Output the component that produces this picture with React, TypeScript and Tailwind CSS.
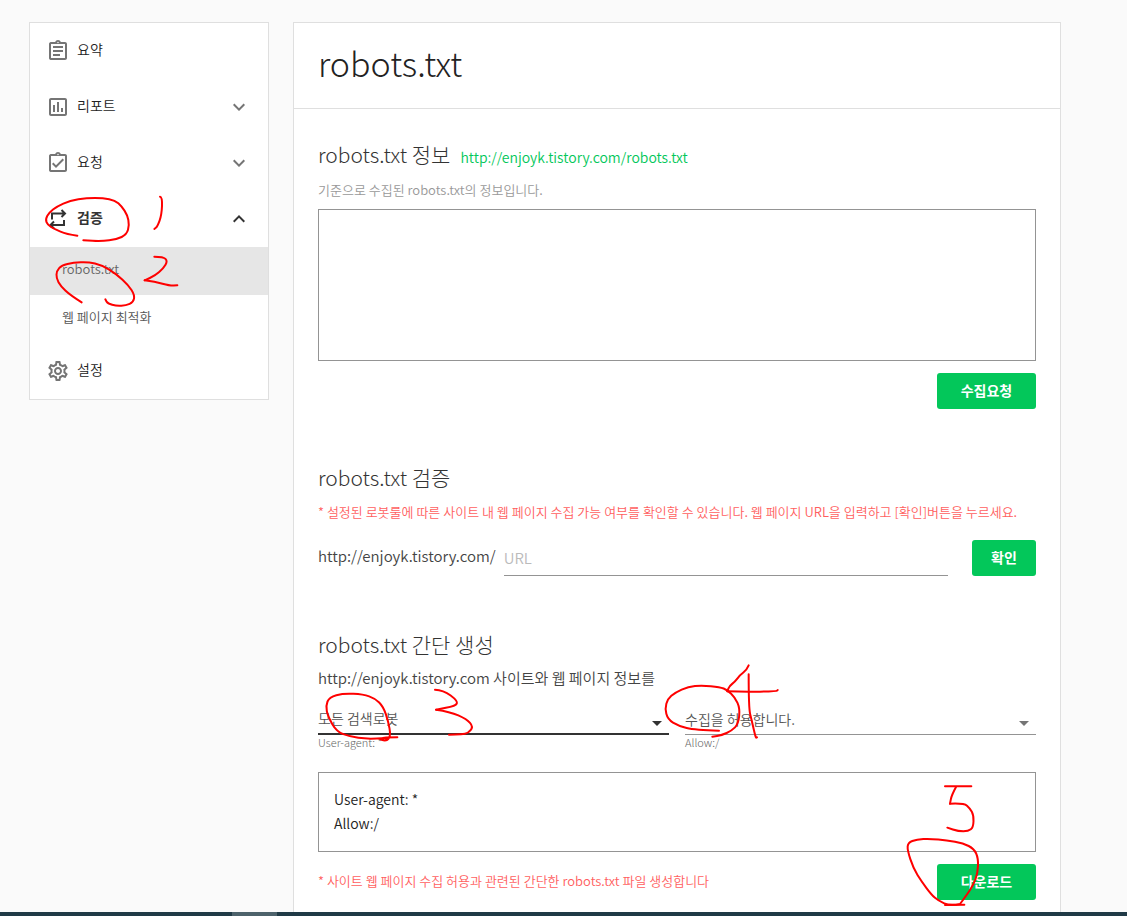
import type { ReactNode } from "react";
import {
  MdExpandLess,
  MdExpandMore,
  MdOutlineAssessment,
  MdOutlineAssignment,
  MdOutlineAssignmentTurnedIn,
  MdOutlineSettings,
} from "react-icons/md";

type Point = [number, number];

interface InkGroup {
  x: number;
  y: number;
  strokes: Point[][];
}

/* Pen strokes drawn over the page, in thirds of a pixel from each group's origin. */
const ink: InkGroup[] = [
  {
    x: 20,
    y: 185,
    strokes: [
      [[172, 152], [140, 148], [103, 132], [83, 120], [76, 103], [88, 82], [110, 65], [150, 47], [200, 39], [250, 39], [285, 46], [305, 64], [322, 90], [328, 120], [320, 149], [290, 163], [245, 169], [190, 166]],
      [[420, 35], [427, 36], [425, 90], [412, 125], [403, 132]],
      [[403, 215], [430, 215], [443, 228], [430, 250], [405, 272], [374, 286]],
      [[374, 286], [405, 290], [450, 302], [472, 301]],
      [[185, 352], [150, 330], [122, 303], [109, 280], [110, 258], [125, 241], [160, 233], [205, 231], [245, 240], [290, 268], [325, 300], [344, 330], [340, 352], [318, 361], [290, 363], [263, 356], [256, 343]],
    ],
  },
  {
    x: 300,
    y: 620,
    strokes: [
      [[292, 352], [250, 352], [238, 359], [262, 363], [272, 345], [265, 305], [250, 260], [225, 235], [190, 223], [130, 220], [88, 231], [77, 258], [84, 290], [110, 335], [150, 350], [200, 357], [260, 354]],
      [[405, 209], [430, 210], [474, 243], [467, 258], [408, 269]],
      [[408, 269], [450, 275], [500, 297], [520, 320], [505, 339], [485, 343], [447, 344]],
    ],
  },
  {
    x: 640,
    y: 640,
    strokes: [
      [[237, 272], [165, 270], [115, 258], [83, 238], [75, 205], [83, 177], [105, 158], [145, 140], [185, 136], [240, 141], [262, 150], [285, 172], [300, 205], [295, 252], [275, 272], [245, 286], [217, 290]],
      [[326, 76], [320, 90], [300, 105], [285, 125], [268, 138], [262, 154]],
      [[262, 154], [310, 156], [410, 154], [413, 150]],
      [[326, 103], [326, 205], [335, 240], [347, 294], [351, 292]],
    ],
  },
  {
    x: 860,
    y: 760,
    strokes: [
      [[255, 79], [334, 79]],
      [[288, 81], [275, 105], [270, 131]],
      [[270, 131], [312, 129], [330, 145], [341, 165], [340, 202], [325, 214], [295, 214], [262, 203]],
      [[300, 432], [270, 438], [235, 422], [215, 405], [185, 365], [160, 325], [142, 270], [144, 248], [170, 238], [210, 236], [260, 241], [310, 250], [342, 266], [355, 295], [353, 340], [340, 375], [320, 405], [300, 432]],
      [[255, 435], [313, 434]],
    ],
  },
];

function strokePath(points: Point[]): string {
  const last = points[points.length - 1];
  let d = `M${points[0][0]} ${points[0][1]}`;
  for (let i = 1; i < points.length - 1; i++) {
    const [x, y] = points[i];
    const [nx, ny] = points[i + 1];
    d += ` Q${x} ${y} ${(x + nx) / 2} ${(y + ny) / 2}`;
  }
  return `${d} L${last[0]} ${last[1]}`;
}

function PenNotes() {
  return (
    <svg
      className="pointer-events-none absolute left-0 top-0"
      width="1127"
      height="916"
      fill="none"
      stroke="#fe0000"
      strokeWidth="6"
      strokeLinecap="round"
      strokeLinejoin="round"
      aria-hidden="true"
    >
      {ink.map((group) => (
        <g key={group.y} transform={`translate(${group.x} ${group.y}) scale(0.33333)`}>
          {group.strokes.map((points, i) => (
            <path key={i} d={strokePath(points)} />
          ))}
        </g>
      ))}
    </svg>
  );
}

function VerifyIcon() {
  return (
    <svg width="24" height="24" viewBox="0 0 24 24" fill="none" stroke="currentColor" strokeWidth="2" aria-hidden="true">
      <path d="M6 12.500V6.500h13M15.500 3l3.500 3.500-3.500 3.500M18 13v5H4.500M8 14.500 4.500 18 8 21.500" />
    </svg>
  );
}

interface NavItemProps {
  icon: ReactNode;
  label: string;
  state?: "closed" | "open";
}

function NavItem({ icon, label, state }: NavItemProps) {
  const open = state === "open";
  return (
    <button
      type="button"
      aria-expanded={state ? open : undefined}
      className={
        open
          ? "flex h-14 w-full items-center gap-[7px] pl-4 pr-[17px] text-left text-[14px] font-bold text-[#333]"
          : "flex h-14 w-full items-center gap-[7px] pl-4 pr-[17px] text-left text-[14px] font-[350] text-[#222]"
      }
    >
      <span className={open ? "text-[#333]" : "text-[#757575]"}>{icon}</span>
      <span className="flex-1 pb-[3px]">{label}</span>
      {state === "closed" && <MdExpandMore size={24} className="text-[#757575]" />}
      {open && <MdExpandLess size={24} className="text-[#333]" />}
    </button>
  );
}

function GreenButton({ children, wide }: { children: ReactNode; wide?: boolean }) {
  return (
    <button
      type="button"
      className={
        wide
          ? "h-9 w-[99px] shrink-0 rounded-[3px] bg-[#03c75a] pb-[2px] text-[14px] font-bold text-white"
          : "h-9 w-16 shrink-0 rounded-[3px] bg-[#03c75a] pb-[2px] text-[14px] font-bold text-white"
      }
    >
      {children}
    </button>
  );
}

function SectionTitle({ children }: { children: ReactNode }) {
  return <h2 className="text-[21px] font-light leading-[26px] text-[#333]">{children}</h2>;
}

interface RuleSelectProps {
  id: string;
  label: string;
  options: string[];
  hint: string;
  focused?: boolean;
}

function RuleSelect({ id, label, options, hint, focused }: RuleSelectProps) {
  return (
    <div className="flex-1">
      <div
        className={
          focused
            ? "flex h-[31px] items-center border-b-2 border-[#333] text-[#333]"
            : "flex h-[31px] items-center border-b border-[#949494] text-[#757575]"
        }
      >
        <select
          id={id}
          aria-label={label}
          className="h-full min-w-0 flex-1 appearance-none bg-transparent text-[14px] font-[350] text-[#555] outline-none"
        >
          {options.map((option) => (
            <option key={option}>{option}</option>
          ))}
        </select>
        <svg width="24" height="24" viewBox="0 0 24 24" className="mt-2 shrink-0" aria-hidden="true">
          <path d="M7 10h10l-5 5z" fill="currentColor" />
        </svg>
      </div>
      <p className="text-[11px] font-light leading-[14px] text-[#666]">{hint}</p>
    </div>
  );
}

export default function App() {
  return (
    <div className="relative flex min-h-screen flex-col overflow-x-hidden bg-[#fafafa] font-['Noto_Sans_CJK_KR',sans-serif] font-[350] text-[#333]">
      <div className="flex flex-1 items-stretch gap-6 pl-[29px] pr-[66px] pt-[22px]">
        <nav className="w-60 shrink-0 self-start border border-[#dfdfdf] bg-white">
          <NavItem icon={<MdOutlineAssignment size={24} />} label="요약" />
          <NavItem icon={<MdOutlineAssessment size={24} />} label="리포트" state="closed" />
          <NavItem icon={<MdOutlineAssignmentTurnedIn size={24} />} label="요청" state="closed" />
          <NavItem icon={<VerifyIcon />} label="검증" state="open" />
          <a href="#robots" className="flex h-12 items-center bg-[#e6e6e6] pb-1 pl-8 text-[13px] text-[#666]">
            robots.txt
          </a>
          <a href="#optimize" className="flex h-12 items-center pb-1 pl-8 text-[13px] text-[#555]">
            웹 페이지 최적화
          </a>
          <NavItem icon={<MdOutlineSettings size={24} />} label="설정" />
        </nav>

        <main className="min-w-0 flex-1 border border-b-0 border-[#dfdfdf] bg-white">
          <header className="flex h-[86px] items-center border-b border-[#dfdfdf] px-6 pb-[6px]">
            <h1 className="text-[34px] font-light leading-10 text-[#222]">robots.txt</h1>
          </header>

          <div className="flex flex-col gap-[55px] px-6 pb-3 pt-8">
            <section>
              <div className="flex h-[26px] items-baseline gap-[10px]">
                <SectionTitle>robots.txt 정보</SectionTitle>
                <a href="#robots-file" className="text-[14px] leading-5 text-[#03c75a]">
                  http://enjoyk.tistory.com/robots.txt
                </a>
              </div>
              <label htmlFor="robots-content" className="mt-3 block text-[13px] leading-[22px] text-[#999]">
                기준으로 수집된 robots.txt의 정보입니다.
              </label>
              <textarea
                id="robots-content"
                className="mt-2 block h-[152px] w-full resize-none border border-[#949494] bg-white p-4 text-[14px] outline-none"
              />
              <div className="mt-3 flex justify-end">
                <GreenButton wide>수집요청</GreenButton>
              </div>
            </section>

            <section>
              <SectionTitle>robots.txt 검증</SectionTitle>
              <p className="mt-[11px] text-[13px] leading-[22px] text-[#ff5f5f]">
                * 설정된 로봇룰에 따른 사이트 내 웹 페이지 수집 가능 여부를 확인할 수 있습니다. 웹 페이지 URL을 입력하고 [확인]버튼을 누르세요.
              </p>
              <div className="mt-[17px] flex items-center">
                <label htmlFor="page-url" className="pb-1 text-[15px] leading-6 text-[#444]">
                  http://enjoyk.tistory.com/
                </label>
                <input
                  id="page-url"
                  type="text"
                  placeholder="URL"
                  className="ml-2 mr-6 h-9 min-w-0 flex-1 border-b border-[#949494] bg-transparent text-[15px] outline-none placeholder:text-[#bbb]"
                />
                <GreenButton>확인</GreenButton>
              </div>
            </section>

            <section>
              <SectionTitle>robots.txt 간단 생성</SectionTitle>
              <p className="mt-[10px] text-[15px] leading-[22px] text-[#444]">
                http://enjoyk.tistory.com 사이트와 웹 페이지 정보를
              </p>
              <div className="mt-[15px] flex gap-4">
                <RuleSelect id="agent" label="검색로봇" options={["모든 검색로봇"]} hint="User-agent: *" focused />
                <RuleSelect id="rule" label="수집 허용 여부" options={["수집을 허용합니다."]} hint="Allow:/" />
              </div>
              <div className="mt-[23px] border border-[#949494] px-[15px] pb-4 pt-[14px] text-[14px] leading-6 text-[#222]">
                <p>User-agent: *</p>
                <p>Allow:/</p>
              </div>
              <div className="mt-3 flex items-center justify-between">
                <p className="pb-[2px] text-[13px] leading-[22px] text-[#ff5f5f]">
                  * 사이트 웹 페이지 수집 허용과 관련된 간단한 robots.txt 파일 생성합니다
                </p>
                <GreenButton wide>다운로드</GreenButton>
              </div>
            </section>
          </div>
        </main>
      </div>
      <footer className="flex h-1 shrink-0 bg-[#203a46]">
        <div className="ml-[232px] w-[45px] bg-[#4d626b]" />
      </footer>
      <PenNotes />
    </div>
  );
}
